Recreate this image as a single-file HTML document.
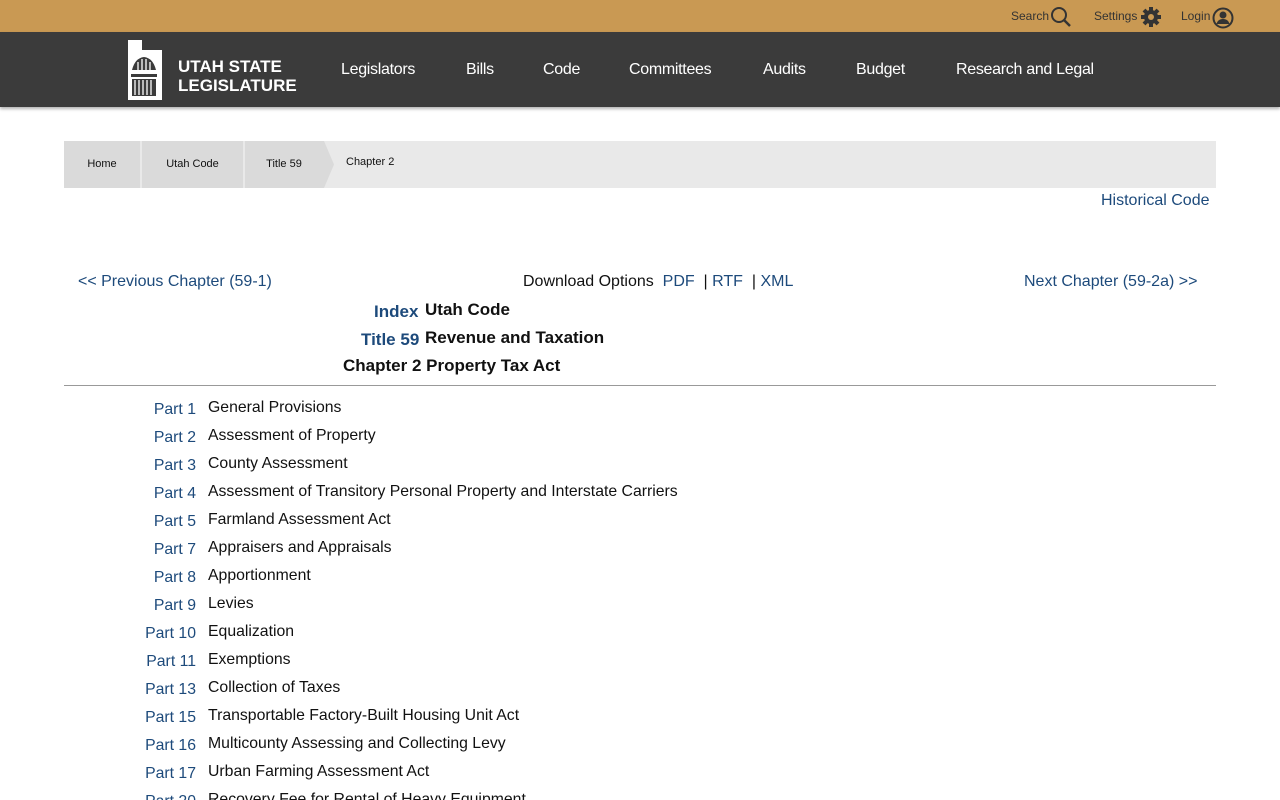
<!DOCTYPE html>
<html><head><meta charset="utf-8"><style>
*{margin:0;padding:0;box-sizing:border-box}
body{width:1280px;height:800px;overflow:hidden;background:#fff;font-family:"Liberation Sans",sans-serif;color:#111;position:relative}
.top{height:32px;background:#c99953;position:relative;font-size:12px;color:#333}
.top span{position:absolute;top:9px}
.nav{height:75px;background:#3b3b3b;position:relative;box-shadow:0 2px 3px rgba(0,0,0,.3)}
.nav a{position:absolute;top:29px;color:#fff;font-size:16px;letter-spacing:-0.3px;text-decoration:none}
.logo{position:absolute;left:128px;top:8px}
.lt{position:absolute;left:178px;top:25px;color:#fff;font-weight:bold;font-size:17px;line-height:19px}
.bc{position:absolute;left:64px;top:141px;width:1152px;height:47px;background:#e9e9e9;font-size:11px}
.bc div{position:absolute;top:0;height:47px;background:#dadada;line-height:47px;text-align:center}
a{color:#1d4a7b;text-decoration:none}
.p{position:absolute;font-size:16px;white-space:nowrap}
.row{position:absolute;left:0;width:1280px;font-size:15.8px;height:28px}
.row .n{position:absolute;left:116px;width:80px;text-align:right;color:#1d4a7b;top:2px}
.row .t{position:absolute;left:208px;white-space:nowrap}
</style></head><body>
<div class="top">
<span style="left:1011px">Search</span>
<svg style="position:absolute;left:1050px;top:6px" width="22" height="22" viewBox="0 0 22 22"><circle cx="9" cy="9" r="7" fill="none" stroke="#333" stroke-width="2"/><path d="M14 14l6 6" stroke="#333" stroke-width="2.5"/></svg>
<span style="left:1094px">Settings</span>
<svg style="position:absolute;left:1140px;top:6px" width="22" height="22" viewBox="0 0 22 22"><circle cx="11" cy="11" r="7" fill="#333"/><g stroke="#333" stroke-width="4"><path d="M11 1v20M1 11h20M4 4l14 14M18 4L4 18"/></g><circle cx="11" cy="11" r="3" fill="#c99953"/></svg>
<span style="left:1181px">Login</span>
<svg style="position:absolute;left:1212px;top:7px" width="22" height="22" viewBox="0 0 22 22"><circle cx="11" cy="11" r="9.5" fill="none" stroke="#333" stroke-width="2"/><circle cx="11" cy="8" r="3.5" fill="#333"/><path d="M4.5 17c1-4 4-5 6.5-5s5.5 1 6.5 5z" fill="#333"/></svg>
</div>
<div class="nav">
<svg class="logo" width="46" height="60" viewBox="0 0 46 60"><path d="M0 0h14v10h20v50H0z" fill="#fff"/><path d="M4 30q3-12 12-13q9 1 12 13zM3 34h26v3H3zM4 39h24v17H4z" fill="#3b3b3b"/><g stroke="#fff" stroke-width="1.3"><path d="M7 40v15M11 40v15M15 40v15M19 40v15M23 40v15M10 22v9M14 19v12M18 19v12M22 22v9"/></g></svg>
<div class="lt">UTAH STATE<br>LEGISLATURE</div>
<a style="left:341px">Legislators</a><a style="left:466px">Bills</a><a style="left:543px">Code</a><a style="left:629px">Committees</a><a style="left:763px">Audits</a><a style="left:856px">Budget</a><a style="left:956px">Research and Legal</a>
</div>
<div class="bc">
<div style="left:0;width:76px">Home</div>
<div style="left:78px;width:101px">Utah Code</div>
<div style="left:181px;width:78px">Title 59</div>
<svg style="position:absolute;left:259px;top:0" width="12" height="47"><path d="M0 0h1l10 23.5L1 47H0z" fill="#dadada"/></svg>
<span style="position:absolute;left:282px;top:15px">Chapter 2</span>
</div>
<a class="p" style="left:1101px;top:192px">Historical Code</a>
<a class="p" style="left:78px;top:273px">&lt;&lt; Previous Chapter (59-1)</a>
<span class="p" style="left:523px;top:273px">Download Options&nbsp; <a>PDF</a> &nbsp;| <a>RTF</a> &nbsp;| <a>XML</a></span>
<a class="p" style="left:1024px;top:273px">Next Chapter (59-2a) &gt;&gt;</a>
<a class="p" style="left:374px;top:302px;font-weight:bold;font-size:17px">Index</a><b class="p" style="left:425px;top:300px;font-size:17px">Utah Code</b>
<a class="p" style="left:361px;top:330px;font-weight:bold;font-size:17px">Title 59</a><b class="p" style="left:425px;top:328px;font-size:17px">Revenue and Taxation</b>
<b class="p" style="left:343px;top:356px;font-size:17px">Chapter 2 Property Tax Act</b>
<div style="position:absolute;left:64px;top:385px;width:1152px;height:1px;background:#999"></div>
<div style="position:absolute;left:0;top:399px;width:1280px;height:401px;overflow:hidden">
<div class="row" style="top:0"><span class="n">Part 1</span><span class="t">General Provisions</span></div>
<div class="row" style="top:28px"><span class="n">Part 2</span><span class="t">Assessment of Property</span></div>
<div class="row" style="top:56px"><span class="n">Part 3</span><span class="t">County Assessment</span></div>
<div class="row" style="top:84px"><span class="n">Part 4</span><span class="t">Assessment of Transitory Personal Property and Interstate Carriers</span></div>
<div class="row" style="top:112px"><span class="n">Part 5</span><span class="t">Farmland Assessment Act</span></div>
<div class="row" style="top:140px"><span class="n">Part 7</span><span class="t">Appraisers and Appraisals</span></div>
<div class="row" style="top:168px"><span class="n">Part 8</span><span class="t">Apportionment</span></div>
<div class="row" style="top:196px"><span class="n">Part 9</span><span class="t">Levies</span></div>
<div class="row" style="top:224px"><span class="n">Part 10</span><span class="t">Equalization</span></div>
<div class="row" style="top:252px"><span class="n">Part 11</span><span class="t">Exemptions</span></div>
<div class="row" style="top:280px"><span class="n">Part 13</span><span class="t">Collection of Taxes</span></div>
<div class="row" style="top:308px"><span class="n">Part 15</span><span class="t">Transportable Factory-Built Housing Unit Act</span></div>
<div class="row" style="top:336px"><span class="n">Part 16</span><span class="t">Multicounty Assessing and Collecting Levy</span></div>
<div class="row" style="top:364px"><span class="n">Part 17</span><span class="t">Urban Farming Assessment Act</span></div>
<div class="row" style="top:392px"><span class="n">Part 20</span><span class="t">Recovery Fee for Rental of Heavy Equipment</span></div>
</div>
</body></html>
